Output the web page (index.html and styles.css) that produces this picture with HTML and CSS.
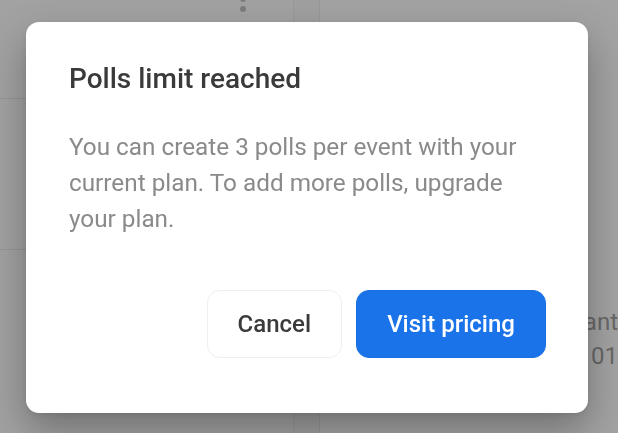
FILE: index.html
```html
<!DOCTYPE html>
<html lang="en">
<head>
<meta charset="utf-8">
<title>Polls limit reached</title>
<link rel="stylesheet" href="styles.css">
</head>
<body>
<div class="page">
  <div class="col col-left">
    <div class="row row-top"><span class="kebab"><i></i><i></i></span></div>
    <div class="row row-mid"></div>
    <div class="row row-bottom"></div>
  </div>
  <div class="col col-mid"></div>
  <div class="col col-right">
    <div class="cell-text">
      <span class="peek">ant</span>
      <span class="peek">01</span>
    </div>
  </div>
</div>

<div class="overlay">
  <div class="dialog" role="dialog" aria-labelledby="dlg-title">
    <h2 class="dialog-title" id="dlg-title">Polls limit reached</h2>
    <p class="dialog-text">You can create 3 polls per event with your current plan. To add more polls, upgrade your plan.</p>
    <div class="dialog-actions">
      <button class="btn btn-secondary">Cancel</button>
      <button class="btn btn-primary">Visit pricing</button>
    </div>
  </div>
</div>
</body>
</html>
```

FILE: styles.css
```css
* { box-sizing: border-box; }

html, body {
  margin: 0;
  height: 100%;
}

body {
  background: #a2a2a2;
  font-family: Roboto, "Liberation Sans", sans-serif;
  overflow: hidden;
}

/* dimmed page behind the modal */
.page {
  display: grid;
  grid-template-columns: 293px 27px 1fr;
  height: 100%;
}

.col-left {
  display: flex;
  flex-direction: column;
}

.row-top {
  height: 99px;
  border-bottom: 1px solid #959595;
  position: relative;
}

.row-mid {
  height: 151px;
  border-bottom: 1px solid #959595;
}

.row-bottom { flex: 1; }

.kebab {
  position: absolute;
  left: 240px;
  top: -4px;
  display: flex;
  flex-direction: column;
  gap: 4px;
}

.kebab i {
  display: block;
  width: 6px;
  height: 6px;
  border-radius: 50%;
  background: #7c7c7c;
}

.col-mid {
  border-left: 1px solid #989898;
  border-right: 1px solid #989898;
  background: #a0a0a0;
}

.col-right {
  display: flex;
  justify-content: flex-end;
  background: #a3a3a3;
}

.cell-text {
  display: flex;
  flex-direction: column;
  align-items: flex-end;
  padding-top: 308px;
  gap: 6px;
  font-size: 24px;
  line-height: 28px;
  color: #686868;
}

/* modal */
.overlay {
  position: fixed;
  inset: 0;
  display: flex;
  align-items: flex-start;
  padding: 22px 0 0 26px;
}

.dialog {
  width: 562px;
  background: #ffffff;
  border-radius: 13px;
  padding: 40px 42px 55px 43px;
  box-shadow: 0 18px 40px rgba(0, 0, 0, 0.3), 0 2px 6px rgba(0, 0, 0, 0.08);
}

.dialog-title {
  margin: 0;
  font-size: 28px;
  line-height: 33px;
  font-weight: 500;
  color: #3a3a3a;
}

.dialog-text {
  margin: 34px 0 0;
  font-size: 24.3px;
  line-height: 36px;
  font-weight: 400;
  color: #8a8a8a;
}

.dialog-actions {
  display: flex;
  justify-content: flex-end;
  gap: 14px;
  margin-top: 53px;
}

.btn {
  height: 68px;
  padding: 0 30px;
  border-radius: 13px;
  font-family: inherit;
  font-size: 24px;
  font-weight: 500;
  cursor: pointer;
}

.btn-secondary {
  background: #ffffff;
  border: 1.5px solid #efefef;
  color: #3a3a3a;
}

.btn-primary {
  background: #1a73e8;
  border: 1px solid #1a6fe0;
  color: #ffffff;
  min-width: 190px;
}
```
